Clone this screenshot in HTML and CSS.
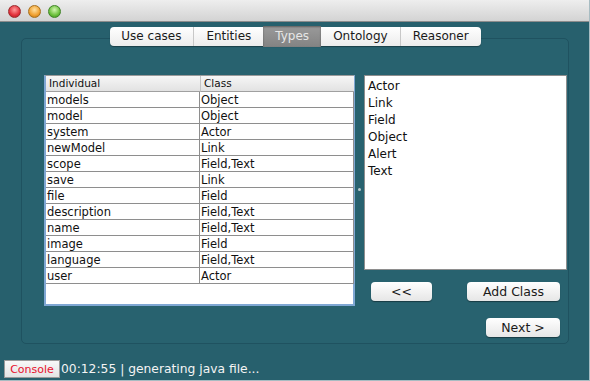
FILE: index.html
```html
<!DOCTYPE html>
<html lang="en">
  <head>
    <meta charset="UTF-8" />
    <meta name="viewport" content="width=device-width, initial-scale=1.0" />
    <title>Types</title>
    <link rel="stylesheet" href="styles.css">
  </head>
  <body>
    <div class="window">
      <div class="titlebar">
        <span class="light red"></span>
        <span class="light orange"></span>
        <span class="light green"></span>
      </div>
      <div class="content">
        <nav class="tabs">
          <span class="tab">Use cases</span>
          <span class="tab">Entities</span>
          <span class="tab selected">Types</span>
          <span class="tab">Ontology</span>
          <span class="tab">Reasoner</span>
        </nav>
        <section class="panel">
          <div class="table-wrap">
            <table class="types-table">
              <thead>
                <tr><th>Individual</th><th>Class</th></tr>
              </thead>
              <tbody>
                <tr><td>models</td><td>Object</td></tr>
                <tr><td>model</td><td>Object</td></tr>
                <tr><td>system</td><td>Actor</td></tr>
                <tr><td>newModel</td><td>Link</td></tr>
                <tr><td>scope</td><td>Field,Text</td></tr>
                <tr><td>save</td><td>Link</td></tr>
                <tr><td>file</td><td>Field</td></tr>
                <tr><td>description</td><td>Field,Text</td></tr>
                <tr><td>name</td><td>Field,Text</td></tr>
                <tr><td>image</td><td>Field</td></tr>
                <tr><td>language</td><td>Field,Text</td></tr>
                <tr><td>user</td><td>Actor</td></tr>
              </tbody>
            </table>
          </div>
          <div class="divider"><span class="grip"></span></div>
          <div class="side">
            <ul class="class-list">
              <li>Actor</li>
              <li>Link</li>
              <li>Field</li>
              <li>Object</li>
              <li>Alert</li>
              <li>Text</li>
            </ul>
            <div class="btn-row">
              <button class="btn back">&lt;&lt;</button>
              <button class="btn add">Add Class</button>
            </div>
            <div class="btn-row end">
              <button class="btn next">Next &gt;</button>
            </div>
          </div>
        </section>
        <footer class="status">
          <button class="console">Console</button>
          <span class="status-text">00:12:55 | generating java file...</span>
        </footer>
      </div>
    </div>
  </body>
</html>
```

FILE: styles.css
```css
body {
  margin: 0;
  padding: 0;
  font-family: "DejaVu Sans", "Liberation Sans", sans-serif;
  background-color: #27606d;
}
.window {
  width: 589px;
  height: 380px;
  border-right: 1px solid #a7bcc2;
  border-bottom: 1px solid #a7bcc2;
  display: flex;
  flex-direction: column;
}
.titlebar {
  flex-shrink: 0;
  height: 21px;
  border-bottom: 1px solid #8c8c8c;
  background: linear-gradient(#eeeeee, #d3d3d3);
  display: flex;
  align-items: center;
  gap: 7px;
  padding-left: 8px;
}
.light {
  width: 13px;
  height: 13px;
  border-radius: 50%;
  box-sizing: border-box;
  margin-top: 2px;
}
.red {
  background: radial-gradient(circle at 50% 35%, #ff9a9a, #e2303a 60%, #a81e22);
  border: 1px solid #9c2a2c;
}
.orange {
  background: radial-gradient(circle at 50% 35%, #ffe0a0, #f0a030 60%, #b26a12);
  border: 1px solid #a8701c;
}
.green {
  background: radial-gradient(circle at 50% 35%, #d2f5b0, #6cc03c 60%, #3a8a1e);
  border: 1px solid #3f8426;
}
.content {
  flex: 1;
  display: flex;
  flex-direction: column;
}
.tabs {
  position: relative;
  z-index: 1;
  align-self: center;
  display: flex;
  flex-shrink: 0;
  height: 19px;
  margin: 5px 0 -8px 2px;
  background: linear-gradient(#ffffff, #ececec);
  border-radius: 4px;
  box-shadow: 0 1px 1px rgba(0, 0, 0, 0.35);
  font-size: 12px;
  line-height: 19px;
  color: #1a1a1a;
}
.tab {
  padding: 0 12px;
  border-left: 1px solid #c8c8c8;
}
.tab:first-child {
  border-left: none;
  padding-left: 11px;
}
.tab.selected + .tab {
  border-left: none;
}
.tab.selected {
  border-left: none;
  background: linear-gradient(#9a9a9a, #838383);
  color: #e6e6e6;
  margin: -1px 0;
  line-height: 21px;
  box-shadow: inset 0 1px 2px rgba(0, 0, 0, 0.4);
}
.panel {
  flex-shrink: 0;
  box-sizing: border-box;
  margin: 0 20px 0 21px;
  height: 306px;
  border: 1px solid #1f5260;
  border-radius: 5px;
  background-color: #28626f;
  display: flex;
  align-items: flex-start;
  padding: 36px 1px 0 22px;
}
.table-wrap {
  box-sizing: border-box;
  width: 311px;
  height: 231px;
  background: white;
  border: 2px solid #7fa7d3;
  border-top: 1px solid #9a9a9a;
}
.types-table {
  width: 308px;
  border-collapse: separate;
  border-spacing: 0;
  color: #111;
}
.types-table th {
  height: 15px;
  padding: 0 0 0 3px;
  font-size: 10.5px;
  line-height: 15px;
  font-weight: normal;
  text-align: left;
  background: linear-gradient(#f6f6f6, #e2e2e2);
  border-bottom: 1px solid #a0a0a0;
  border-left: 1px solid #c4c4c4;
}
.types-table th:first-child {
  width: 151px;
  border-left: none;
}
.types-table td {
  height: 14px;
  padding: 1px 0 0 1px;
  font-size: 11.5px;
  line-height: 14px;
  border-bottom: 1px solid #8e8e8e;
  border-right: 1px solid #8e8e8e;
}
.divider {
  width: 9px;
  height: 231px;
  display: flex;
  justify-content: center;
  padding-top: 113px;
  box-sizing: border-box;
}
.grip {
  width: 3px;
  height: 3px;
  border-radius: 50%;
  background: #b9c9cd;
}
.side {
  width: 203px;
  display: flex;
  flex-direction: column;
}
.class-list {
  box-sizing: border-box;
  height: 195px;
  margin: 0;
  padding: 2px 0 0 3px;
  list-style: none;
  background: white;
  border: 1px solid #8e8e8e;
  font-size: 12px;
  line-height: 17px;
  color: #111;
}
.btn-row {
  display: flex;
  justify-content: space-between;
  padding: 0 7px;
  margin-top: 12px;
}
.btn-row.end {
  justify-content: flex-end;
  margin-top: 17px;
}
.btn {
  height: 19px;
  padding: 0;
  font-family: "DejaVu Sans", "Liberation Sans", sans-serif;
  font-size: 12.5px;
  color: #1a1a1a;
  background: linear-gradient(#ffffff, #e6e6e6);
  border: none;
  border-radius: 4px;
  box-shadow: 0 1px 1px rgba(0, 0, 0, 0.4);
}
.back {
  width: 61px;
}
.add {
  width: 93px;
}
.next {
  width: 74px;
}
.status {
  flex-shrink: 0;
  height: 37px;
  box-sizing: border-box;
  padding: 16px 0 0 4px;
  display: flex;
  align-items: flex-start;
}
.console {
  height: 18px;
  width: 56px;
  padding: 0;
  font-family: "DejaVu Sans", "Liberation Sans", sans-serif;
  font-size: 11px;
  color: #e8112d;
  background: linear-gradient(#f8f8f8, #e4e4e4);
  border: 1px solid #9a9a9a;
}
.status-text {
  color: #f4f4f4;
  font-size: 12.3px;
  line-height: 18px;
  margin-left: 1px;
}
```
